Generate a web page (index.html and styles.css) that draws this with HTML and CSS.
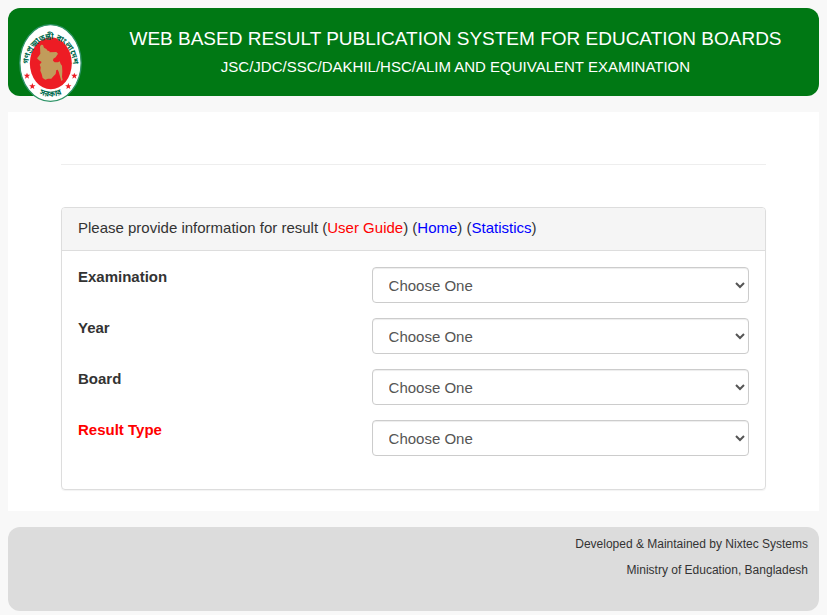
FILE: index.html
```html
<!DOCTYPE html>
<html lang="en">
<head>
<meta charset="utf-8">
<meta name="viewport" content="width=device-width, initial-scale=1">
<title>Education Board Results</title>
<link rel="stylesheet" href="styles.css">
</head>
<body>
<header class="banner">
  <svg class="emblem" viewBox="57 71 189 234" role="img" aria-label="Government seal">
    <defs>
      <path id="arc-top" d="M85 198 A67 82 0 0 1 219 198"/>
      <path id="arc-bottom" d="M74 226 A84 100 0 0 0 230 226"/>
      <path id="star" d="M0-10 2.500-3.500H9.500L4 1 6 8 0 4-6 8-4 1-9.500-3.500H-2.500Z"/>
    </defs>
    <ellipse cx="151.500" cy="188" rx="92" ry="115" fill="#fff" stroke="#2f9468" stroke-width="4"/>
    <ellipse cx="152.500" cy="189" rx="63" ry="78" fill="#ed1c24"/>
    <path fill="#c19c5b" d="M120 139l3-6 6 1 3 8 7 4 4 5 5 1 1 4 20-1 5 5-4 6-3 5-7 4-1 6 5 5 10 0 5-3 3 8 4 5 1 16-1 18 2 9-4 3-4-14-4-14-3-6-4 1-2 12-8 8-5 6-10 0-8 3-8-5-3-12-4-10 1-10-3-8 6-8-8-5-6-6 6-8 4-6z"/>
    <g fill="#ed1c24">
      <use href="#star" x="81" y="227"/>
      <use href="#star" x="97" y="258"/>
      <use href="#star" x="205" y="258"/>
      <use href="#star" x="223" y="227"/>
    </g>
    <g class="emblem-text">
      <text><textPath href="#arc-top" startOffset="50%">গণপ্রজাতন্ত্রী বাংলাদেশ</textPath></text>
      <text><textPath href="#arc-bottom" startOffset="50%">সরকার</textPath></text>
    </g>
  </svg>
  <h1 class="banner-title">WEB BASED RESULT PUBLICATION SYSTEM FOR EDUCATION BOARDS</h1>
  <p class="banner-subtitle">JSC/JDC/SSC/DAKHIL/HSC/ALIM AND EQUIVALENT EXAMINATION</p>
</header>

<main class="content">
  <hr class="divider">
  <form class="panel">
    <div class="panel-heading">Please provide information for result (<a class="guide" href="#guide">User Guide</a>) (<a href="#home">Home</a>) (<a href="#statistics">Statistics</a>)</div>
    <div class="panel-body">
      <div class="field">
        <label for="exam">Examination</label>
        <select id="exam"><option>Choose One</option></select>
      </div>
      <div class="field">
        <label for="year">Year</label>
        <select id="year"><option>Choose One</option></select>
      </div>
      <div class="field">
        <label for="board">Board</label>
        <select id="board"><option>Choose One</option></select>
      </div>
      <div class="field">
        <label class="required" for="type">Result Type</label>
        <select id="type"><option>Choose One</option></select>
      </div>
    </div>
  </form>
</main>

<footer class="footer">
  <p>Developed &amp; Maintained by Nixtec Systems</p>
  <p>Ministry of Education, Bangladesh</p>
</footer>
</body>
</html>
```
FILE: styles.css
```css
* {
  box-sizing: border-box;
}

body {
  display: flex;
  flex-direction: column;
  gap: 16px;
  margin: 0;
  padding: 8px 8px 4px;
  background: #f8f8f8;
  color: #333;
  font-family: "Liberation Sans", Arial, sans-serif;
  font-size: 15px;
  line-height: 20px;
}

.banner {
  position: relative;
  padding: 17px 0 15px 84px;
  border-radius: 12px;
  background: #007814;
  color: #fff;
  text-align: center;
}

.emblem {
  position: absolute;
  top: 16px;
  left: 11px;
  width: 63px;
  height: 78px;
}

.emblem-text {
  fill: #006a4e;
  font-family: "Noto Sans Bengali", "Noto Sans", sans-serif;
  font-size: 24px;
  font-weight: bold;
  text-anchor: middle;
}

.banner-title {
  margin: 0;
  font-size: 19px;
  font-weight: normal;
  line-height: 28px;
}

.banner-subtitle {
  margin: 0;
  font-size: 15px;
  line-height: 28px;
}

.content {
  padding: 52px 53px 21px;
  background: #fff;
}

.divider {
  margin: 0 0 42px;
  border: 0;
  border-top: 1px solid #eee;
}

.panel {
  border: 1px solid #ddd;
  border-radius: 4px;
  box-shadow: 0 1px 1px rgba(0, 0, 0, 0.05);
}

.panel-heading {
  padding: 10px 16px 12px;
  border-bottom: 1px solid #ddd;
  border-radius: 3px 3px 0 0;
  background: #f5f5f5;
}

.panel-heading a {
  color: #00f;
  text-decoration: none;
}

.panel-heading .guide,
.required {
  color: #f00;
}

.panel-body {
  display: grid;
  gap: 15px;
  padding: 16px 16px 33px;
}

.field {
  display: grid;
  grid-template-columns: 7fr 9fr;
  align-items: start;
}

.field label {
  font-weight: bold;
}

.field select {
  width: 100%;
  height: 36px;
  padding: 6px 12px;
  border: 1px solid #ccc;
  border-radius: 4px;
  background-color: #fff;
  box-shadow: inset 0 1px 1px rgba(0, 0, 0, 0.075);
  color: #555;
  font: inherit;
}

.footer {
  min-height: 84px;
  padding: 4px 11px;
  border-radius: 12px;
  background: #dcdcdc;
  font-size: 12px;
  line-height: 26px;
  text-align: right;
}

.footer p {
  margin: 0;
}
```
